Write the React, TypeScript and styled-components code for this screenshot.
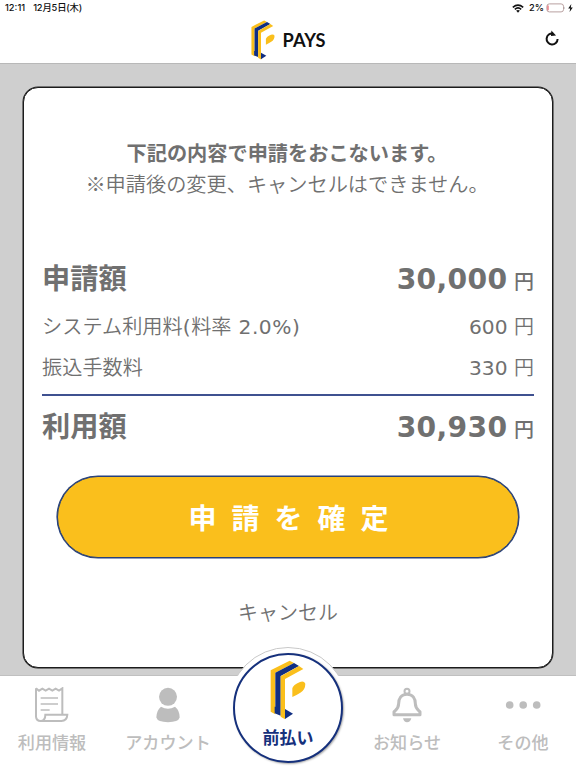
import React from "react";
import styled, { createGlobalStyle } from "styled-components";

const GlobalStyle = createGlobalStyle`
  * { box-sizing: border-box; }
  body { margin: 0; background: #cfcfcf; overflow: hidden; }
  button { font: inherit; border: 0; padding: 0; background: none; cursor: pointer; }
`;

const jp = `"Noto Sans CJK JP", sans-serif`;

const Screen = styled.div`
  width: 576px;
  height: 768px;
  display: flex;
  flex-direction: column;
  background: #cfcfcf;
  color: #707070;
  font-family: ${jp};
  overflow: hidden;
`;

const Header = styled.header`
  height: 64px;
  flex: none;
  display: flex;
  flex-direction: column;
  background: #fff;
  border-bottom: 1px solid #b8b8b8;
`;

const StatusBar = styled.div`
  height: 16px;
  display: flex;
  align-items: center;
  padding: 0 3px 0 5px;
  font: 500 9.3px/16px Inter, ${jp};
  color: #111;
`;

const StatusDate = styled.span`
  margin-left: 8px;
  letter-spacing: -0.15px;
`;

const StatusIcons = styled.span`
  margin-left: auto;
  display: flex;
  align-items: center;
  gap: 5px;
`;

const Power = styled.span`
  display: flex;
  align-items: center;
  gap: 2px;
`;

const TitleBar = styled.div`
  height: 47px;
  display: grid;
  grid-template-columns: 1fr auto 1fr;
  align-items: center;
`;

const Brand = styled.div`
  grid-column: 2;
  display: flex;
  align-items: center;
  gap: 8px;
`;

const BrandName = styled.span`
  font: 700 18.2px/24px Lato, sans-serif;
  color: #111;
`;

const Reload = styled.button`
  justify-self: end;
  display: flex;
  margin-right: 16px;
  padding-bottom: 3px;
`;

const Main = styled.main`
  flex: 1;
  padding: 23px 23px 0;
`;

const Card = styled.section`
  height: 581px;
  display: flex;
  flex-direction: column;
  padding: 0 18px;
  background: #fff;
  border: 1px solid #1c1c1c;
  border-radius: 15px;
  box-shadow: 0 0 0 0.5px #1c1c1c;
`;

const Message = styled.div`
  padding-top: 49px;
  text-align: center;
  font-size: 20.2px;
  line-height: 31px;
  white-space: nowrap;
`;

const Strong = styled.p`
  margin: 0 2px 0 0;
  font-weight: 700;
`;

const Note = styled.p`
  margin: 0 2px 0 0;
  font-weight: 350;
`;

const Rows = styled.div`
  padding-top: 57px;
`;

const Row = styled.div<{ $total?: boolean }>`
  height: ${(p) => (p.$total ? 42 : 40.5)}px;
  display: flex;
  justify-content: space-between;
  align-items: baseline;
  font-size: ${(p) => (p.$total ? 28.2 : 20.2)}px;
  font-weight: ${(p) => (p.$total ? 700 : 350)};
  line-height: ${(p) => (p.$total ? 42 : 40)}px;
  white-space: nowrap;
`;

const Digits = styled.span<{ $bold?: boolean }>`
  font-family: "DejaVu Sans", ${jp};
  font-weight: ${(p) => (p.$bold ? 700 : 400)};
  letter-spacing: ${(p) => (p.$bold ? 0.35 : 0)}px;
`;

const WideDigits = styled(Digits)`
  letter-spacing: 0.55px;
`;

const Amount = styled.span`
  display: flex;
  align-items: baseline;
  gap: 6.5px;
`;

const Yen = styled.span<{ $bold?: boolean }>`
  font-size: 20px;
  font-weight: ${(p) => (p.$bold ? 500 : "inherit")};
`;

const Fees = styled.div`
  padding: 8px 0 7px;
  margin-bottom: 8px;
  border-bottom: 2px solid #3f5190;
`;

const Confirm = styled.button`
  && {
    height: 82px;
    flex: none;
    margin: 30px 15px 0;
    padding: 0 0 1px 16px;
    background: #fabf1c;
    border: 1px solid #26407c;
    border-radius: 42px;
    box-shadow: 0 0 0 0.6px #26407c;
    color: #fff;
    font: 700 28px/40px ${jp};
    letter-spacing: 15px;
  }
`;

const Cancel = styled.button`
  && {
    margin-top: 37px;
    color: #707070;
    font: 350 20px/34px ${jp};
  }
`;

const Nav = styled.nav`
  height: 93px;
  flex: none;
  display: grid;
  grid-template-columns: 104px 128px 112px 126px 106px;
  background: #fff;
  border-top: 1px solid #c0c0c0;
  position: relative;
`;

const NavItem = styled.button`
  && {
    display: flex;
    flex-direction: column;
    align-items: center;
    padding-top: 11px;
    gap: 6px;
    color: #bdbdbd;
    font: 500 17.1px/26px ${jp};
    white-space: nowrap;
  }
`;

const Halo = styled.div`
  position: absolute;
  left: 228px;
  top: -29px;
  width: 120px;
  height: 120px;
  border-radius: 50%;
  border: 1px solid #c8c8c8;
  background: #fff;
  clip-path: inset(0 0 91px 0);
`;

const Advance = styled.button`
  && {
    position: absolute;
    left: 233px;
    top: -23px;
    width: 110px;
    height: 110px;
    display: flex;
    flex-direction: column;
    align-items: center;
    padding-top: 5px;
    border: 2px solid #15307c;
    border-radius: 50%;
    background: #fff;
    box-shadow: 1px 1px 2px rgba(0, 0, 0, 0.35);
    color: #15307c;
    font: 700 17px/24px ${jp};
  }
`;

const AdvanceLabel = styled.span`
  margin-top: 5px;
`;

function Logo({ width, height }: { width: number; height: number }) {
  return (
    <svg width={width} height={height} viewBox="150 60 108 180" preserveAspectRatio="none">
      <path d="M152 91 209 62 222 69 166 98V223L152 215Z" fill="#fabf1c" />
      <path d="M166 98 222 69 237 78 182 108V227L164 220V200H166Z" fill="#112f83" />
      <path d="M182 109 237 78 250 87 195 117V238L182 230Z" fill="#fabf1c" />
      <path d="M195 207 219 221 195 237Z" fill="#112f83" />
      <path d="M217 145Q219 135 240 126Q252 122 256 131Q256 149 241 158Q230 165 217 171Z" fill="#fabf1c" />
    </svg>
  );
}

export default function App() {
  return (
    <>
      <GlobalStyle />
      <Screen>
        <Header>
          <StatusBar>
            <span>12:11</span>
            <StatusDate>12月5日(木)</StatusDate>
            <StatusIcons>
              <svg width="12" height="9" viewBox="0 0 12 9" fill="none" stroke="#111" strokeWidth="1.6">
                <path d="M.8 3.3Q6-1.1 11.2 3.3M2.8 5.3Q6 2.5 9.2 5.3" />
                <path d="M4.1 6.6Q6 5.2 7.9 6.6L6 8.7Z" fill="#111" stroke="none" />
              </svg>
              <Power>
                <span>2%</span>
                <svg width="20" height="10" viewBox="0 0 20 10">
                  <rect x=".9" y=".9" width="16.6" height="8" rx="2.4" fill="#fff" stroke="#b9a0a0" />
                  <path d="M2 2.6V7.2" stroke="#e8606a" strokeWidth="1.2" />
                  <path d="M18.4 3.5Q19.8 5 18.4 6.5Z" fill="#aaa" />
                </svg>
                <svg width="5" height="8" viewBox="0 0 5 8">
                  <path d="M3.3 0 .2 4.4H2.2L1.6 8 4.8 3.4H2.8Z" fill="#111" />
                </svg>
              </Power>
            </StatusIcons>
          </StatusBar>
          <TitleBar>
            <Brand>
              <Logo width={24} height={40} />
              <BrandName>PAYS</BrandName>
            </Brand>
            <Reload aria-label="更新">
              <svg width="16" height="17" viewBox="0 0 16 17" fill="none">
                <path d="M9 3.5A5.5 5.5 0 1 0 13.6 9" stroke="#111" strokeWidth="2" />
                <path d="M7.4 .6 12 5.4 7 6Z" fill="#111" />
              </svg>
            </Reload>
          </TitleBar>
        </Header>
        <Main>
          <Card>
            <Message>
              <Strong>下記の内容で申請をおこないます。</Strong>
              <Note>※申請後の変更、キャンセルはできません。</Note>
            </Message>
            <Rows>
              <Row $total>
                <span>申請額</span>
                <Amount><Digits $bold>30,000</Digits><Yen $bold>円</Yen></Amount>
              </Row>
              <Fees>
                <Row>
                  <span>システム利用料<WideDigits>(</WideDigits>料率<WideDigits> 2.0%)</WideDigits></span>
                  <Amount><Digits>600</Digits><Yen>円</Yen></Amount>
                </Row>
                <Row>
                  <span>振込手数料</span>
                  <Amount><Digits>330</Digits><Yen>円</Yen></Amount>
                </Row>
              </Fees>
              <Row $total>
                <span>利用額</span>
                <Amount><Digits $bold>30,930</Digits><Yen $bold>円</Yen></Amount>
              </Row>
            </Rows>
            <Confirm>申請を確定</Confirm>
            <Cancel>キャンセル</Cancel>
          </Card>
        </Main>
        <Nav>
          <NavItem>
            <svg width="34" height="36" viewBox="105 142 102 106" fill="none" stroke="#bdbdbd" strokeWidth="6">
              <path d="M108 145 117 152 127 146 137 152 147 146 157 152 167 146 177 152 187 145V223" />
              <path d="M108 145V230Q109 243 122 243H184Q201 243 202 224H136Q136 242 122 243" />
              <path d="M122 174H174M122 192H174M122 210H149" strokeWidth="5" />
            </svg>
            <span>利用情報</span>
          </NavItem>
          <NavItem>
            <svg width="26" height="36" viewBox="466 141 78 107" fill="#bdbdbd">
              <circle cx="505" cy="170" r="27" />
              <path d="M484 200Q505 212 526 200Q540 211 540 232Q536 246 505 246Q474 246 470 232Q471 210 484 200Z" />
            </svg>
            <span>アカウント</span>
          </NavItem>
          <div />
          <NavItem>
            <svg width="32" height="36" viewBox="106 141 96 107" fill="none" stroke="#bdbdbd" strokeWidth="9">
              <circle cx="154" cy="153" r="7.5" strokeWidth="6" />
              <path d="M154 162C136 162 129 176 129 190C129 205 121 209 115 215V224H193V215C187 209 179 205 179 190C179 176 172 162 154 162Z" strokeLinejoin="round" />
              <path d="M142 234H167Q164 246 154 246Q145 246 142 234Z" fill="#bdbdbd" stroke="none" />
            </svg>
            <span>お知らせ</span>
          </NavItem>
          <NavItem>
            <svg width="36" height="36" viewBox="0 0 36 36" fill="#bdbdbd">
              <circle cx="4.7" cy="18" r="3.8" />
              <circle cx="18.2" cy="18" r="3.8" />
              <circle cx="31.7" cy="18" r="3.8" />
            </svg>
            <span>その他</span>
          </NavItem>
          <Halo />
          <Advance>
            <Logo width={36} height={60} />
            <AdvanceLabel>前払い</AdvanceLabel>
          </Advance>
        </Nav>
      </Screen>
    </>
  );
}
